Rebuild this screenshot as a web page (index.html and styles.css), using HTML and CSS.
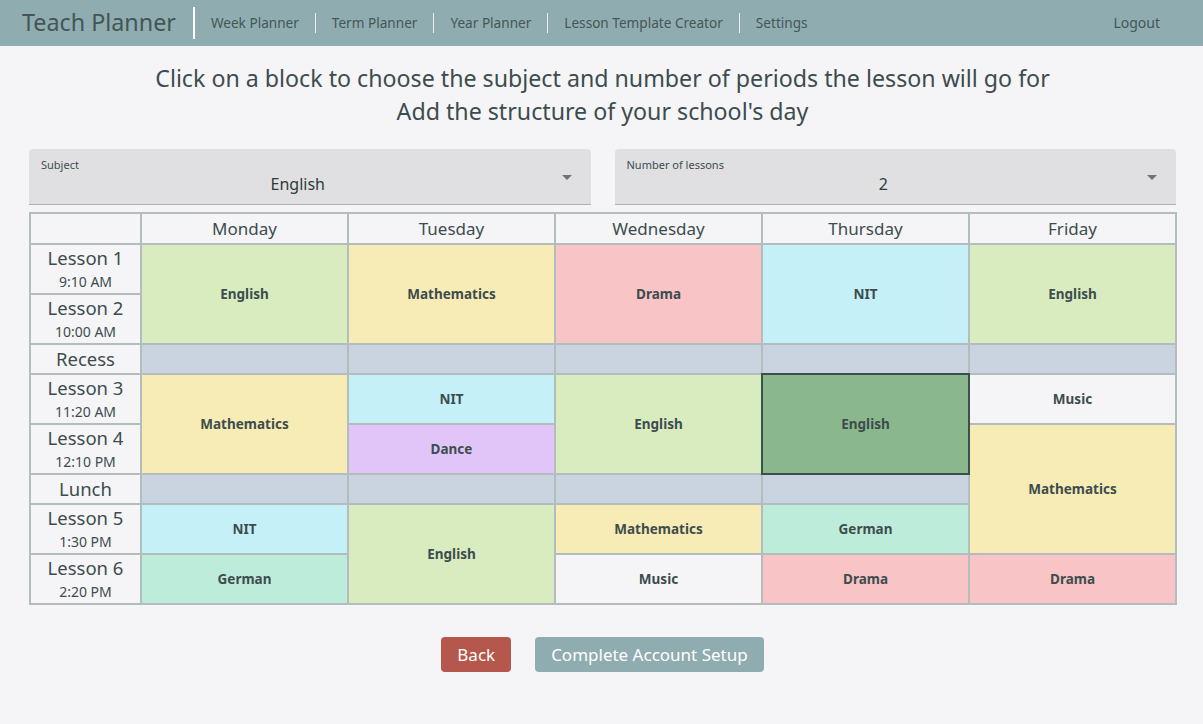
FILE: index.html
```html
<!DOCTYPE html>
<html>
<head>
<meta charset="utf-8">
<link rel="stylesheet" href="styles.css">
</head>
<body>
<header class="nav">
  <div class="brand">Teach Planner</div>
  <nav class="links">
    <a>Week Planner</a>
    <a>Term Planner</a>
    <a>Year Planner</a>
    <a>Lesson Template Creator</a>
    <a>Settings</a>
  </nav>
  <a class="logout">Logout</a>
</header>
<main class="page">
  <h1 class="intro">Click on a block to choose the subject and number of periods the lesson will go for<br>Add the structure of your school's day</h1>
  <div class="selects">
    <div class="select">
      <div class="label">Subject</div>
      <div class="value">English</div>
      <span class="caret"></span>
    </div>
    <div class="select">
      <div class="label">Number of lessons</div>
      <div class="value">2</div>
      <span class="caret"></span>
    </div>
  </div>
  <div class="grid">
    <div class="hd" style="grid-row:1;grid-column:1"></div>
    <div class="hd" style="grid-row:1;grid-column:2">Monday</div>
    <div class="hd" style="grid-row:1;grid-column:3">Tuesday</div>
    <div class="hd" style="grid-row:1;grid-column:4">Wednesday</div>
    <div class="hd" style="grid-row:1;grid-column:5">Thursday</div>
    <div class="hd" style="grid-row:1;grid-column:6">Friday</div>

    <div class="lbl" style="grid-row:2"><span class="ln">Lesson 1</span><span class="tm">9:10 AM</span></div>
    <div class="lbl" style="grid-row:3"><span class="ln">Lesson 2</span><span class="tm">10:00 AM</span></div>
    <div class="lbl" style="grid-row:4"><span class="ln">Recess</span></div>
    <div class="lbl" style="grid-row:5"><span class="ln">Lesson 3</span><span class="tm">11:20 AM</span></div>
    <div class="lbl" style="grid-row:6"><span class="ln">Lesson 4</span><span class="tm">12:10 PM</span></div>
    <div class="lbl" style="grid-row:7"><span class="ln">Lunch</span></div>
    <div class="lbl" style="grid-row:8"><span class="ln">Lesson 5</span><span class="tm">1:30 PM</span></div>
    <div class="lbl" style="grid-row:9"><span class="ln">Lesson 6</span><span class="tm">2:20 PM</span></div>

    <!-- Monday -->
    <div class="c english" style="grid-row:2/4;grid-column:2">English</div>
    <div class="c brk" style="grid-row:4;grid-column:2"></div>
    <div class="c maths" style="grid-row:5/7;grid-column:2">Mathematics</div>
    <div class="c brk" style="grid-row:7;grid-column:2"></div>
    <div class="c nit" style="grid-row:8;grid-column:2">NIT</div>
    <div class="c german" style="grid-row:9;grid-column:2">German</div>
    <!-- Tuesday -->
    <div class="c maths" style="grid-row:2/4;grid-column:3">Mathematics</div>
    <div class="c brk" style="grid-row:4;grid-column:3"></div>
    <div class="c nit" style="grid-row:5;grid-column:3">NIT</div>
    <div class="c dance" style="grid-row:6;grid-column:3">Dance</div>
    <div class="c brk" style="grid-row:7;grid-column:3"></div>
    <div class="c english" style="grid-row:8/10;grid-column:3">English</div>
    <!-- Wednesday -->
    <div class="c drama" style="grid-row:2/4;grid-column:4">Drama</div>
    <div class="c brk" style="grid-row:4;grid-column:4"></div>
    <div class="c english" style="grid-row:5/7;grid-column:4">English</div>
    <div class="c brk" style="grid-row:7;grid-column:4"></div>
    <div class="c maths" style="grid-row:8;grid-column:4">Mathematics</div>
    <div class="c music" style="grid-row:9;grid-column:4">Music</div>
    <!-- Thursday -->
    <div class="c nit" style="grid-row:2/4;grid-column:5">NIT</div>
    <div class="c brk" style="grid-row:4;grid-column:5"></div>
    <div class="c selected" style="grid-row:5/7;grid-column:5">English</div>
    <div class="c brk" style="grid-row:7;grid-column:5"></div>
    <div class="c german" style="grid-row:8;grid-column:5">German</div>
    <div class="c drama" style="grid-row:9;grid-column:5">Drama</div>
    <!-- Friday -->
    <div class="c english" style="grid-row:2/4;grid-column:6">English</div>
    <div class="c brk" style="grid-row:4;grid-column:6"></div>
    <div class="c music" style="grid-row:5;grid-column:6">Music</div>
    <div class="c maths" style="grid-row:6/9;grid-column:6">Mathematics</div>
    <div class="c drama" style="grid-row:9;grid-column:6">Drama</div>
  </div>
  <div class="actions">
    <button class="btn back">Back</button>
    <button class="btn done">Complete Account Setup</button>
  </div>
</main>
</body>
</html>
```
FILE: styles.css
```css
* { box-sizing: border-box; }
html, body { margin: 0; padding: 0; }
body {
  background: #f5f5f7;
  font-family: "Noto Sans", "Open Sans", sans-serif;
  color: #3d4c4e;
  width: 1203px;
  height: 724px;
  overflow: hidden;
}
.nav {
  height: 46px;
  background: #8fadb0;
  display: flex;
  align-items: center;
  padding-left: 22px;
  padding-right: 43px;
}
.brand {
  font-size: 23.3px;
  color: #445556;
  padding-right: 17px;
  border-right: 2px solid #ffffff;
  height: 32px;
  line-height: 30px;
}
.links { display: flex; align-items: center; flex: 1; }
.links a {
  font-size: 13.6px;
  color: #455658;
  padding: 0 16px;
  border-left: 1px solid #e8eeee;
  line-height: 20px;
}
.links a:first-child { border-left: none; }
.logout { font-size: 14px; color: #455658; margin-top: -2px; }

.page { padding: 0 27px 0 29px; }
.intro {
  margin: 16px 0 0;
  font-weight: 400;
  font-size: 23.2px;
  line-height: 33px;
  text-align: center;
  color: #3d4c4e;
}
.selects {
  display: flex;
  gap: 24px;
  margin-top: 21px;
}
.select {
  position: relative;
  flex: 1;
  height: 56px;
  background: #e0e0e2;
  border-radius: 4px 4px 0 0;
  border-bottom: 1px solid #a9b2b3;
  padding: 9px 36px 0 12px;
}
.label { font-size: 11px; color: #3d4c4e; line-height: 14px; }
.value { text-align: center; font-size: 16px; line-height: 20px; margin-top: 2px; color: #2f3a3b; }
.caret {
  position: absolute;
  right: 19px;
  top: 26px;
  width: 0; height: 0;
  border-left: 5px solid transparent;
  border-right: 5px solid transparent;
  border-top: 5px solid #6f7475;
}
.grid {
  margin-top: 7px;
  width: 1148px;
  display: grid;
  grid-template-columns: 109px repeat(5, 205px);
  grid-template-rows: 29px 48px 48px 28px 48px 48px 28px 48px 48px;
  gap: 2px;
  padding: 2px;
  background: #b3bdbe;
}
.hd {
  background: #f5f5f7;
  display: flex; align-items: center; justify-content: center;
  font-size: 17px;
  color: #3d4c4e;
}
.lbl {
  grid-column: 1;
  background: #f5f5f7;
  display: flex; flex-direction: column; align-items: center; justify-content: center;
}
.ln { font-size: 18.5px; line-height: 22px; }
.tm { font-size: 14px; line-height: 20px; margin-top: 3px; }
.c {
  display: flex; align-items: center; justify-content: center;
  font-size: 13.5px;
  font-weight: 700;
  color: #3d4c4e;
}
.english { background: #d8ecc0; }
.maths { background: #f7ecb5; }
.drama { background: #f8c4c5; }
.nit { background: #c5f0f7; }
.dance { background: #e2c5f8; }
.german { background: #bdecda; }
.music { background: #f5f5f7; }
.brk { background: #cad4e0; }
.selected { background: #8ab78c; outline: 2px solid #3a504c; }
.actions {
  display: flex;
  justify-content: center;
  gap: 24px;
  margin-top: 32px;
}
.btn {
  font-family: inherit;
  height: 35px;
  border: none;
  border-radius: 4px;
  color: #ffffff;
  font-size: 17px;
  padding: 0 16px;
}
.back { background: #b5574c; }
.done { background: #8fadb0; }
```
